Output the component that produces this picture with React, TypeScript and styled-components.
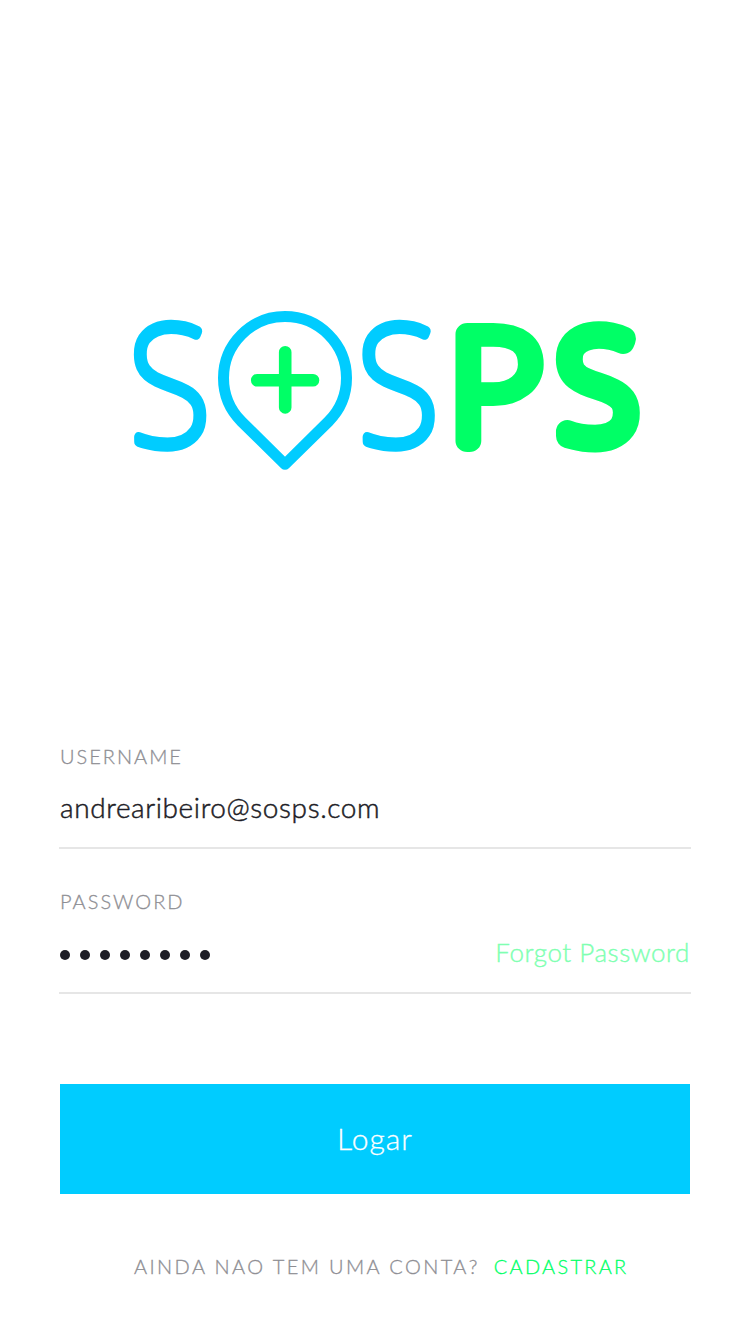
import React from "react";
import styled, { createGlobalStyle } from "styled-components";

const GlobalStyle = createGlobalStyle`
  * { box-sizing: border-box; }
  body {
    margin: 0;
    background: #fff;
    font-family: Lato, "Liberation Sans", sans-serif;
    font-weight: 300;
  }
`;

const Screen = styled.main`
  display: flex;
  flex-direction: column;
  width: 750px;
  height: 1334px;
  overflow: hidden;
  padding: 230px 59px 0;
  background: #fff;
`;

const Logo = styled.svg`
  display: block;
  flex: none;
  width: 580px;
  height: 310px;
  margin-left: 41px;
`;

const Letter = styled.text<{ $color: string; $weight: number; $face?: string }>`
  font-family: ${(p) => p.$face ?? '"Noto Sans"'}, sans-serif;
  font-weight: 100;
  font-size: 100px;
  fill: ${(p) => p.$color};
  stroke: ${(p) => p.$color};
  stroke-width: ${(p) => p.$weight}px;
  stroke-linejoin: round;
  stroke-linecap: round;
  vector-effect: non-scaling-stroke;
`;

const Form = styled.form`
  display: flex;
  flex-direction: column;
  margin-top: 200px;
`;

const Field = styled.div`
  display: flex;
  flex-direction: column;
  height: 145px;
  padding: 4px 1px 0;
`;

const Label = styled.label`
  font-size: 20px;
  line-height: 24px;
  letter-spacing: 2px;
  color: #8e8e93;
  -webkit-text-stroke: 0.3px;
`;

const ValueRow = styled.div`
  display: flex;
  align-items: center;
  justify-content: space-between;
  height: 81px;
  margin: 0 -1px;
  padding: 0 1px 1px;
  border-bottom: 2px solid #e6e6e6;
`;

const Email = styled.span`
  font-size: 28px;
  line-height: 34px;
  letter-spacing: 0.6px;
  color: #1d1d26;
  -webkit-text-stroke: 0.5px;
`;

const Dots = styled.div`
  display: flex;
  gap: 10px;
  padding-top: 6px;
`;

const Dot = styled.span`
  width: 10px;
  height: 10px;
  border-radius: 50%;
  background: #1d1d26;
`;

const Forgot = styled.a`
  font-size: 26px;
  line-height: 32px;
  letter-spacing: 0.55px;
  color: #80ffb2;
  -webkit-text-stroke: 0.4px;
`;

const Submit = styled.button`
  height: 110px;
  margin: 54px 1px 0;
  padding: 0 0 2px;
  border: 0;
  background: #00ccff;
  color: #fff;
  font: 300 30px/36px Lato, sans-serif;
  letter-spacing: 1px;
  -webkit-text-stroke: 0.3px;
`;

const Footer = styled.p`
  display: flex;
  gap: 14px;
  margin: 60px 0 0 75px;
  font-size: 20px;
  line-height: 24px;
  letter-spacing: 2.4px;
  color: #8e8e93;
  white-space: nowrap;
  -webkit-text-stroke: 0.3px;
`;

const SignUp = styled.a`
  color: #00ff66;
  letter-spacing: 2.25px;
`;

const blue = "#00ccff";
const green = "#00ff66";

export default function App() {
  return (
    <>
      <GlobalStyle />
      <Screen>
        <Logo viewBox="100 230 580 310" role="img" aria-label="SOS PS">
          <Letter $color={blue} $weight={9.5} transform="translate(130.5 445) skewX(1) scale(1.47 1.66)">S</Letter>
          <path
            d="M241.5 421.5A61.5 61.5 0 1 1 328.5 421.5L285 464.3Z"
            fill="none"
            stroke={blue}
            strokeWidth="11"
            strokeLinejoin="round"
          />
          <path d="M257.2 380.2H313M285.2 352.2V407.4" stroke={green} strokeWidth="12.6" strokeLinecap="round" />
          <Letter $color={blue} $weight={9.5} transform="translate(359 445) skewX(1) scale(1.47 1.66)">S</Letter>
          <Letter $color={green} $weight={23} $face="Lato" transform="translate(448.5 441) scale(1.63 1.52)">P</Letter>
          <Letter $color={green} $weight={23.5} transform="translate(559.8 438.7) skewX(1) scale(1.41 1.46)">S</Letter>
        </Logo>
        <Form>
          <Field>
            <Label>USERNAME</Label>
            <ValueRow>
              <Email>andrearibeiro@sosps.com</Email>
            </ValueRow>
          </Field>
          <Field>
            <Label>PASSWORD</Label>
            <ValueRow>
              <Dots>
                {Array.from({ length: 8 }, (_, i) => (
                  <Dot key={i} />
                ))}
              </Dots>
              <Forgot>Forgot Password</Forgot>
            </ValueRow>
          </Field>
          <Submit type="button">Logar</Submit>
        </Form>
        <Footer>
          <span>AINDA NAO TEM UMA CONTA?</span>
          <SignUp>CADASTRAR</SignUp>
        </Footer>
      </Screen>
    </>
  );
}
